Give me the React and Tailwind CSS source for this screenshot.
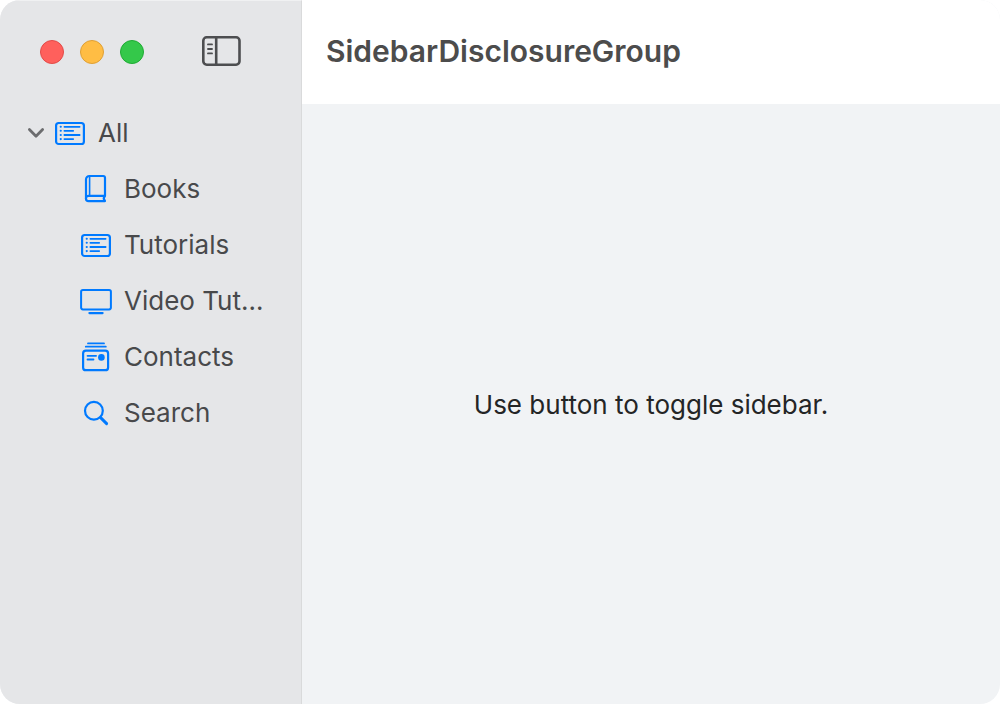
import { useState } from 'react';

function Icon({ children }) {
  return (
    <svg
      viewBox="0 0 32 32"
      className="size-8 shrink-0 text-[#007aff]"
      fill="none"
      stroke="currentColor"
      strokeWidth="2.2"
      strokeLinecap="round"
      strokeLinejoin="round"
      aria-hidden="true"
    >
      {children}
    </svg>
  );
}

function ListIcon() {
  return (
    <Icon>
      <rect x="2.1" y="6" width="27.8" height="21" rx="2.6" />
      <path d="M6.7 9.8h.1M6.7 13.8h.1M6.7 18h.1M6.7 22.1h.1" strokeWidth="2.1" />
      <path d="M10.4 9.8h15.2M10.4 13.8h8.8M10.4 18h15.2M10.4 22.1h8.8" strokeWidth="1.8" />
    </Icon>
  );
}

function BookIcon() {
  return (
    <Icon>
      <path d="M25 22.8V4.8a1.8 1.8 0 0 0-1.8-1.8H9.4A3.4 3.4 0 0 0 6 6.4v18.8" />
      <path d="M25 22.8H8.6a2.6 2.6 0 0 0 0 5.3H25c-1.4-1.5-1.4-3.8 0-5.3" />
      <path d="M9.6 3.6v18.8" strokeWidth="1.6" />
    </Icon>
  );
}

function MonitorIcon() {
  return (
    <Icon>
      <rect x="1.1" y="5" width="29.8" height="19.4" rx="1.8" strokeWidth="2" />
      <path d="M9.4 28.1h13.2" />
    </Icon>
  );
}

function ContactsIcon() {
  return (
    <Icon>
      <rect x="3.1" y="9.6" width="25" height="19.6" rx="2.8" />
      <path d="M5.8 5.7h20M8 2.4h16M7.5 14.8h8.6M7.5 18.5h6" strokeWidth="1.8" />
      <circle cx="21.4" cy="16.4" r="3.3" fill="currentColor" stroke="none" />
    </Icon>
  );
}

function SearchIcon() {
  return (
    <Icon>
      <circle cx="13.9" cy="13.8" r="8.9" />
      <path d="m20.6 20.6 6 6" strokeWidth="2.9" />
    </Icon>
  );
}

const items = [
  { label: 'Books', icon: BookIcon },
  { label: 'Tutorials', icon: ListIcon },
  { label: 'Video Tut…', icon: MonitorIcon },
  { label: 'Contacts', icon: ContactsIcon },
  { label: 'Search', icon: SearchIcon },
];

export default function App() {
  const [sidebarOpen, setSidebarOpen] = useState(true);
  const [expanded, setExpanded] = useState(true);

  return (
    <div className="min-h-screen bg-white font-['Inter',sans-serif] text-[26px] leading-8">
      <div className="flex min-h-screen overflow-hidden rounded-[20px] bg-[#f1f3f5]">
        <aside
          className={`shrink-0 border-t border-r border-t-[#f0f1f2] border-r-[#d9dadb] bg-[#e5e6e8] text-[#48494b] ${
            sidebarOpen ? 'w-[302px]' : 'w-[264px]'
          }`}
        >
          <div className="flex h-[104px] items-center gap-4 pb-0.5 pl-10">
            <button type="button" aria-label="Close" className="size-6 rounded-full border border-[#e24b48] bg-[#ff605c]" />
            <button type="button" aria-label="Minimize" className="size-6 rounded-full border border-[#dfa035] bg-[#ffbd44]" />
            <button type="button" aria-label="Zoom" className="size-6 rounded-full border border-[#1fab34] bg-[#34c84a]" />
            <button
              type="button"
              aria-label="Toggle sidebar"
              aria-pressed={sidebarOpen}
              onClick={() => setSidebarOpen(!sidebarOpen)}
              className="ml-10"
            >
              <svg
                viewBox="0 1 42 32"
                className="h-8 w-[42px] text-[#4d4e50]"
                fill="none"
                stroke="currentColor"
                strokeWidth="2.6"
                strokeLinecap="round"
                aria-hidden="true"
              >
                <rect x="3.3" y="2.3" width="36.2" height="27.4" rx="3.4" />
                <path d="M16.2 2.3v27.4" />
                <path d="M8 9.4h4M8 14h4M8 18.4h4" strokeWidth="1.9" />
              </svg>
            </button>
          </div>

          {sidebarOpen && (
            <nav aria-label="Library">
              <button
                type="button"
                aria-expanded={expanded}
                onClick={() => setExpanded(!expanded)}
                className="flex h-14 w-full items-center pl-7 text-left"
              >
                <svg
                  viewBox="0 0 16 16"
                  className={`mr-2.5 size-4 shrink-0 overflow-visible text-[#6c6d6f] ${expanded ? '' : '-rotate-90'}`}
                  fill="none"
                  stroke="currentColor"
                  strokeWidth="2.8"
                  strokeLinecap="round"
                  strokeLinejoin="round"
                  aria-hidden="true"
                >
                  <path d="m1.4 4.6 6.6 6.6 6.6-6.6" />
                </svg>
                <ListIcon />
                <span className="ml-3">All</span>
              </button>
              {expanded && (
                <ul>
                  {items.map(({ label, icon: ItemIcon }) => (
                    <li key={label}>
                      <a href="#" className="flex h-14 items-center gap-3 pr-6 pl-20">
                        <ItemIcon />
                        <span className="truncate">{label}</span>
                      </a>
                    </li>
                  ))}
                </ul>
              )}
            </nav>
          )}
        </aside>

        <main className="flex min-w-0 flex-1 flex-col">
          <header className="flex h-[104px] items-center bg-white pb-0.5 pl-6">
            <h1 className="text-[30px] leading-9 font-semibold text-[#4c4c4c]">SidebarDisclosureGroup</h1>
          </header>
          <div className="flex flex-1 items-center justify-center pt-0.5 text-[#242526]">
            <p>Use button to toggle sidebar.</p>
          </div>
        </main>
      </div>
    </div>
  );
}
